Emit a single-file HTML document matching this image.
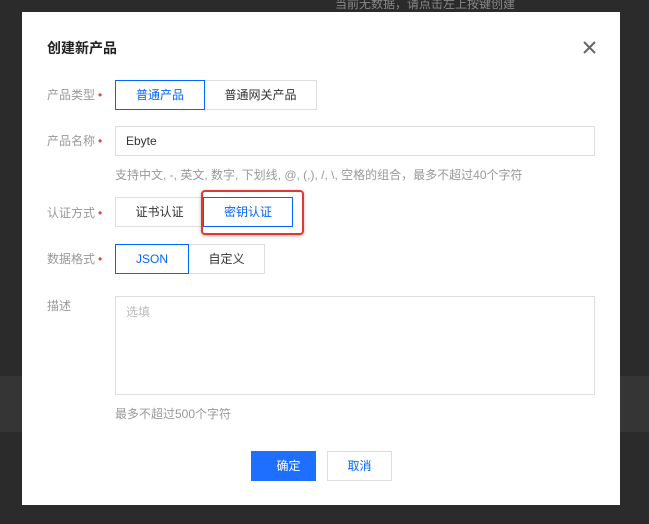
<!DOCTYPE html>
<html><head><meta charset="utf-8"><style>
*{margin:0;padding:0;box-sizing:border-box}
body{width:649px;height:524px;background:#2b2b2b;position:relative;overflow:hidden;font-family:"Liberation Sans","Noto Sans CJK SC",sans-serif;font-size:12px;color:#333}
.band{position:absolute;left:0;right:0;top:376px;height:56px;background:#353535}
.top{position:absolute;left:335px;top:-5px;color:#888;font-size:12px}
.dlg{position:absolute;left:22px;top:12px;width:598px;height:493px;background:#fff}
.a{position:absolute}
.t{left:25px;top:26px;font-size:14px;font-weight:bold;color:#222}
.lbl{left:25px;color:#999;font-size:12px}
.lbl i{color:#e54545;font-style:normal;margin-left:3px}
.b{position:absolute;border:1px solid #ddd;background:#fff;text-align:center;font-size:12px;color:#333}
.s{border-color:#0066ff;color:#0066ff;z-index:2}
.hint{left:93px;color:#999;font-size:12px}
</style></head><body>
<div class="band"></div>
<div class="top">当前无数据，请点击左上按键创建</div>
<div class="dlg">
<div class="a t">创建新产品</div>
<svg class="a" style="left:561px;top:29px" width="13" height="13"><path d="M1 1L12 12M12 1L1 12" stroke="#666" stroke-width="2"/></svg>
<div class="a lbl" style="top:74px">产品类型<i>•</i></div>
<div class="b s" style="left:93px;top:68px;width:90px;height:30px;line-height:28px">普通产品</div>
<div class="b" style="left:182px;top:68px;width:113px;height:30px;line-height:28px">普通网关产品</div>
<div class="a lbl" style="top:120px">产品名称<i>•</i></div>
<div class="b" style="left:93px;top:114px;width:480px;height:30px;line-height:28px;text-align:left;padding-left:10px">Ebyte</div>
<div class="a hint" style="top:154px">支持中文, -, 英文, 数字, 下划线, @, (,), /, \, 空格的组合，最多不超过40个字符</div>
<div class="a lbl" style="top:192px">认证方式<i>•</i></div>
<div class="b" style="left:93px;top:185px;width:89px;height:30px;line-height:28px">证书认证</div>
<div class="b s" style="left:181px;top:185px;width:90px;height:30px;line-height:28px">密钥认证</div>
<div class="a" style="left:179px;top:178px;width:103px;height:45px;border:2px solid #e03a2f;border-radius:4px;z-index:3;box-shadow:0 1px 3px rgba(0,0,0,.3)"></div>
<div class="a lbl" style="top:238px">数据格式<i>•</i></div>
<div class="b s" style="left:93px;top:232px;width:74px;height:30px;line-height:28px">JSON</div>
<div class="b" style="left:166px;top:232px;width:77px;height:30px;line-height:28px">自定义</div>
<div class="a lbl" style="top:285px">描述</div>
<div class="b" style="left:93px;top:284px;width:480px;height:99px;text-align:left;padding:6px 10px;color:#bbb">选填</div>
<div class="a hint" style="top:393px">最多不超过500个字符</div>
<div class="b" style="left:229px;top:439px;width:65px;height:30px;line-height:28px;background:#1e6fff;border-color:#1e6fff;color:#fff;padding-left:10px">确定</div>
<div class="b" style="left:305px;top:439px;width:65px;height:30px;line-height:28px;color:#0066ff">取消</div>
</div>
</body></html>
